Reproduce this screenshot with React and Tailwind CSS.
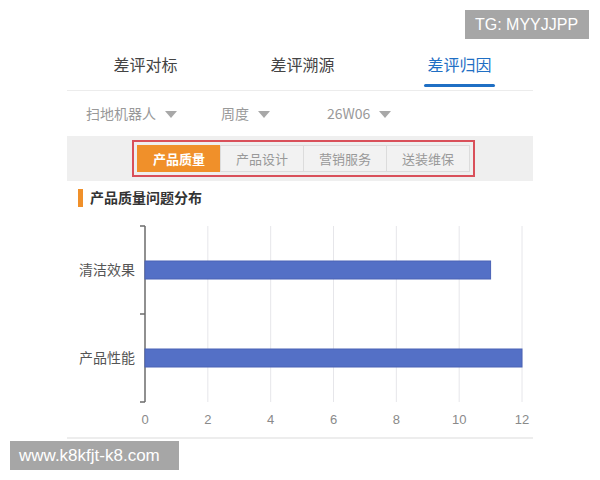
const tabs = ["差评对标", "差评溯源", "差评归因"];
const filters = [
  { label: "扫地机器人", w: "w-[135px]" },
  { label: "周度", w: "w-[106px]" },
  { label: "26W06", w: "w-[80px]" },
];
const segments = ["产品质量", "产品设计", "营销服务", "送装维保"];
const bars = [
  { name: "清洁效果", value: 11 },
  { name: "产品性能", value: 12 },
];

const Caret = () => (
  <svg width="12" height="7" viewBox="0 0 12 7" className="ml-[9px] mt-[2px]">
    <path d="M0 0 H12 L6 7 Z" fill="#a8a8a8" />
  </svg>
);

const Chart = () => {
  // plot area in page px: x 145..522, y 226..402
  const x0 = 78;
  const w = 377;
  const top = 6;
  const h = 176;
  const sx = (v) => x0 + (v / 12) * w;
  return (
    <svg width="466" height="212" viewBox="0 0 466 212" className="block">
      {[2, 4, 6, 8, 10, 12].map((v) => (
        <line key={v} x1={sx(v)} x2={sx(v)} y1={top} y2={top + h} stroke="#e6e6ea" strokeWidth="1" />
      ))}
      <line x1={x0} x2={x0} y1={top} y2={top + h} stroke="#6b6b6b" strokeWidth="1.5" />
      {[0, 1, 2].map((i) => (
        <line key={i} x1={x0 - 5} x2={x0} y1={top + (i * h) / 2} y2={top + (i * h) / 2} stroke="#6b6b6b" strokeWidth="1.5" />
      ))}
      {bars.map((b, i) => {
        const cy = top + (h / 4) * (1 + 2 * i);
        return (
          <g key={b.name}>
            <rect x={x0} y={cy - 9} width={sx(b.value) - x0} height="18" fill="#5470c6" stroke="#4a63b5" strokeWidth="1" />
            <text x={x0 - 10} y={cy + 5} textAnchor="end" fontSize="14" fill="#555" fontFamily="'Noto Sans CJK SC', sans-serif">
              {b.name}
            </text>
          </g>
        );
      })}
      {[0, 2, 4, 6, 8, 10, 12].map((v) => (
        <text key={v} x={sx(v)} y={top + h + 22} textAnchor="middle" fontSize="13" fill="#8a8a8a" fontFamily="'Liberation Sans', sans-serif">
          {v}
        </text>
      ))}
    </svg>
  );
};

export default function App() {
  return (
    <div className="relative w-[600px] h-[480px] overflow-hidden bg-white font-['Noto_Sans_CJK_SC','Noto_Sans',sans-serif]">
      <div className="ml-[67px] w-[466px] pt-[44px] flex flex-col">
        {/* top tabs */}
        <div className="flex h-[47px] border-b border-[#ececec] w-[466px]">
          {tabs.map((t, i) => (
            <div key={t} className="w-[157px] flex flex-col items-center shrink-0">
              <div className={`h-[40px] flex items-center text-[16px] ${i === 2 ? "text-[#1f6fc4]" : "text-[#444]"}`}>{t}</div>
              {i === 2 && <div className="w-[71px] h-[3px] rounded-full bg-[#1f6fc4]" />}
            </div>
          ))}
        </div>

        {/* filters */}
        <div className="flex items-center h-[45px] pl-[19px]">
          {filters.map((f) => (
            <div key={f.label} className={`${f.w} flex items-center text-[14px] text-[#999]`}>
              <span>{f.label}</span>
              <Caret />
            </div>
          ))}
        </div>

        {/* segment band */}
        <div className="bg-[#efefef] h-[45px] flex items-center pl-[65px]">
          <div className="border-2 border-[#d9505a] px-[3px] py-[3px] flex">
            {segments.map((s, i) => (
              <div
                key={s}
                className={`w-[84px] h-[27px] flex items-center justify-center text-[13px] border ${
                  i === 0
                    ? "bg-[#f0902a] border-[#f0902a] text-white font-bold"
                    : "bg-[#f2f2f2] border-[#dcdcdc] text-[#999] -ml-px"
                }`}
              >
                {s}
              </div>
            ))}
          </div>
        </div>

        {/* title */}
        <div className="flex items-center h-[31px] mt-[1px] pl-[11px]">
          <div className="w-[5px] h-[18px] bg-[#f0902a]" />
          <span className="ml-[7px] text-[14px] font-bold text-[#333]">产品质量问题分布</span>
        </div>

        <div className="mt-[7px]">
          <Chart />
        </div>
        <div className="h-[2px] bg-[#ededed] mt-[5px]" />
      </div>

      {/* watermarks */}
      <div className="absolute left-[465px] top-[10px] w-[124px] h-[29px] bg-[#a6a6a6] text-white text-[16px] flex items-center pl-[10px] font-['Liberation_Sans',sans-serif]">
        TG: MYYJJPP
      </div>
      <div className="absolute left-[10px] top-[441px] w-[169px] h-[29px] bg-[#a6a6a6] text-white text-[17px] flex items-center pl-[9px] font-['Liberation_Sans',sans-serif]">
        www.k8kfjt-k8.com
      </div>
    </div>
  );
}
